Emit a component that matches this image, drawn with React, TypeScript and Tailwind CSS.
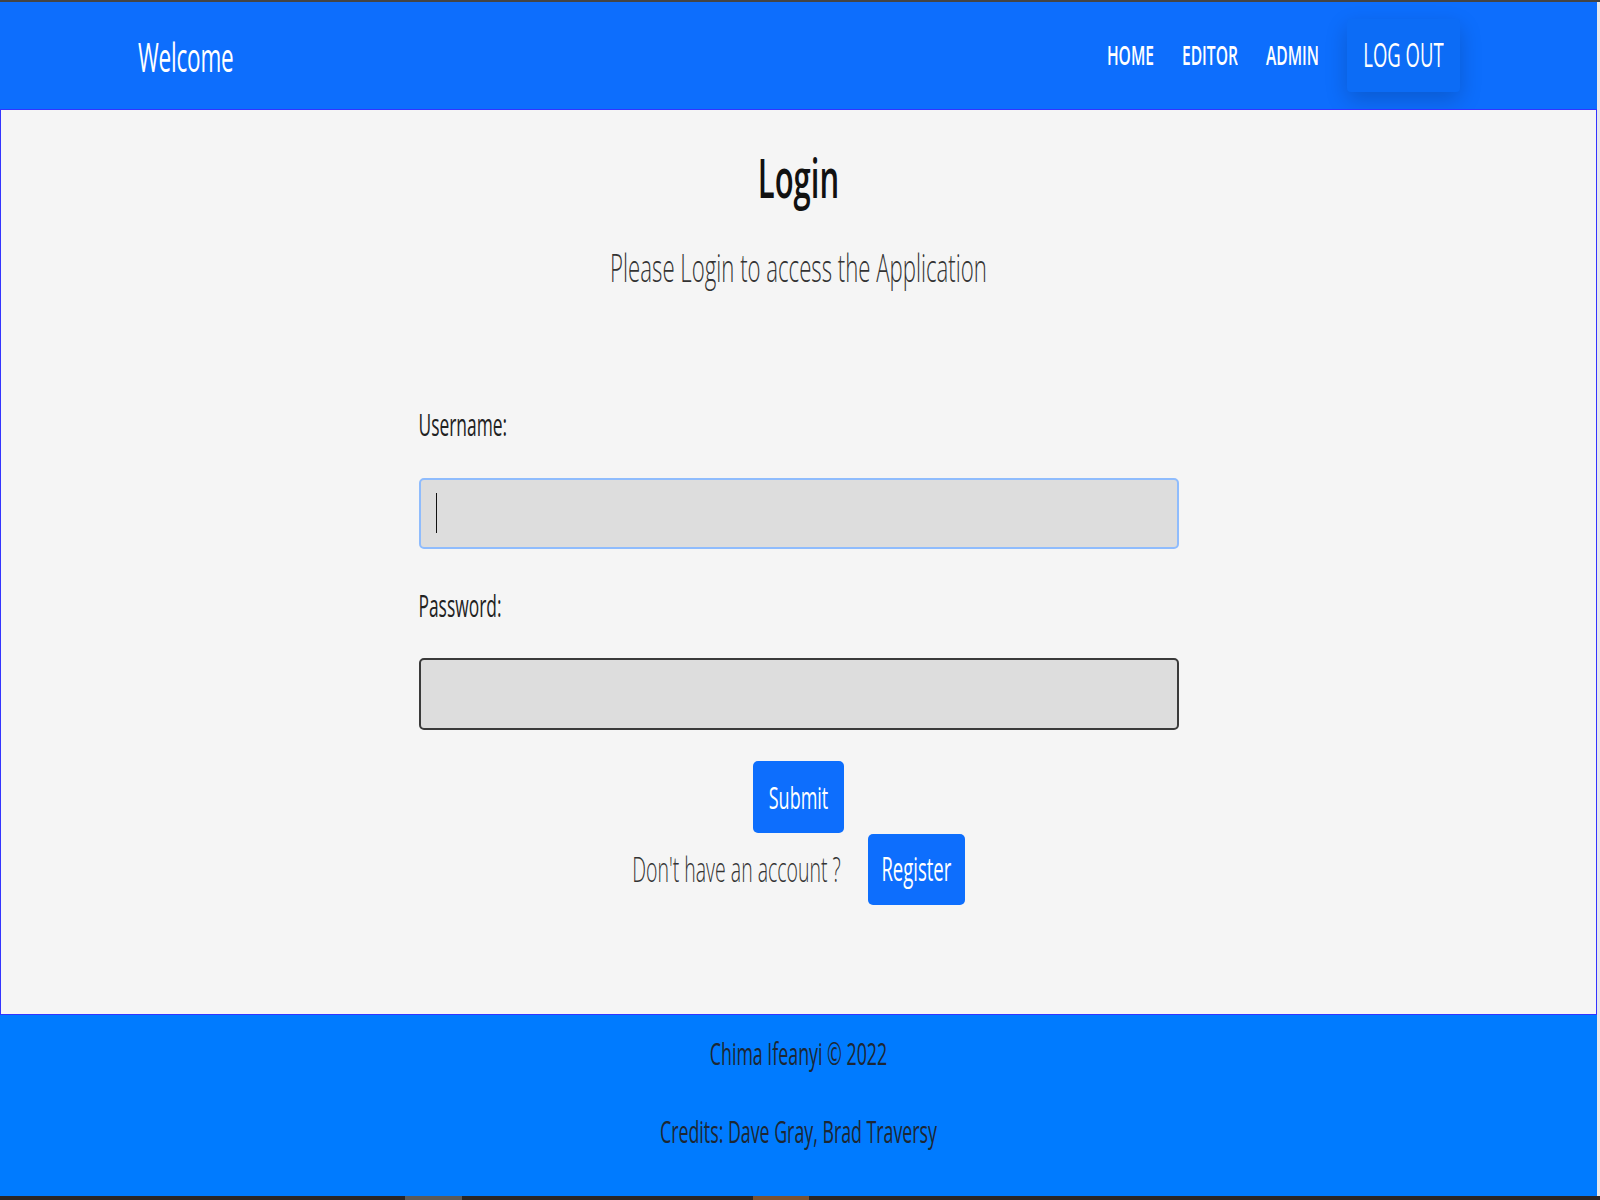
import React from 'react';

const font = { fontFamily: '"Open Sans", "Noto Sans", Arial, sans-serif' };

// text in the shot is stretched tall, so glyphs get a vertical scale
function Tall({ children, className = '' }: { children: React.ReactNode; className?: string }) {
    return <span className={`inline-block origin-center scale-y-[1.75] leading-none whitespace-nowrap ${className}`}>{children}</span>;
}

function NavItem({ label }: { label: string }) {
    return (
        <a href="#" className="text-white font-semibold text-[15.6px]">
            <Tall>{label}</Tall>
        </a>
    );
}

export default function App() {
    return (
        <div className="h-[1200px] w-full overflow-hidden bg-[#e8e8ec] flex flex-col" style={font}>
            <div className="h-[2px] bg-[#444444]" />
            <div className="w-[1597px] flex-1 flex flex-col">
                {/* Navbar */}
                <nav className="h-[107px] bg-[#0d6efd] flex items-center justify-between pl-[138px] pr-[137px]">
                    <a href="#" className="mt-[4px] text-white text-[22.5px] tracking-[-0.2px]">
                        <Tall>Welcome</Tall>
                    </a>
                    <div className="flex items-center gap-[28px]">
                        <NavItem label="HOME" />
                        <NavItem label="EDITOR" />
                        <NavItem label="ADMIN" />
                        <button className="h-[73px] w-[113px] rounded-[4px] bg-[#0c6cf6] text-white text-[18.5px] shadow-[0_8px_22px_rgba(0,0,0,0.18)] flex items-center justify-center">
                            <Tall>LOG OUT</Tall>
                        </button>
                    </div>
                </nav>

                {/* Main */}
                <main className="h-[906px] bg-[#f5f5f5] border border-[#3434ff] flex flex-col items-center">
                    <h1 className="mt-[42px] h-[50px] flex items-center text-[31px] font-semibold text-[#111111]">
                        <Tall>Login</Tall>
                    </h1>
                    <p className="mt-[46px] h-[40px] flex items-center text-[22.2px] font-light text-[#333333]">
                        <Tall>Please Login to access the Application</Tall>
                    </p>

                    <form className="w-[760px] flex flex-col" onSubmit={(e) => e.preventDefault()}>
                        <label className="mt-[122px] h-[30px] flex items-center text-[17.4px] text-[#222222]">
                            <Tall>Username:</Tall>
                        </label>
                        <div className="relative mt-[38px]">
                            <input type="text" className="w-full h-[71px] rounded-[5px] bg-[#dddddd] border-2 border-[#8fbcfd] outline-none px-4" />
                            <span className="absolute left-[17px] top-[15px] w-px h-[40px] bg-[#111111]" />
                        </div>
                        <label className="mt-[42px] h-[30px] flex items-center text-[17.4px] text-[#222222]">
                            <Tall>Password:</Tall>
                        </label>
                        <input type="password" className="mt-[37px] w-full h-[72px] rounded-[5px] bg-[#dddddd] border-2 border-[#3a3a3a] outline-none px-4" />

                        <button type="submit" className="mt-[31px] self-center h-[72px] w-[91px] rounded-[5px] bg-[#0d6efd] text-white text-[18px] flex items-center justify-center">
                            <Tall>Submit</Tall>
                        </button>
                    </form>

                    <div className="mt-px flex items-center gap-[27px]">
                        <span className="text-[19.5px] font-light text-[#333333]">
                            <Tall>Don't have an account ?</Tall>
                        </span>
                        <button className="h-[71px] w-[97px] rounded-[5px] bg-[#0d6efd] text-white text-[18.5px] flex items-center justify-center">
                            <Tall>Register</Tall>
                        </button>
                    </div>
                </main>

                {/* Footer */}
                <footer className="h-[181px] bg-[#007bff] flex flex-col items-center text-[#1d2733] text-[17.8px]">
                    <div className="mt-[24px] h-[30px] flex items-center">
                        <Tall>Chima Ifeanyi © 2022</Tall>
                    </div>
                    <div className="mt-[48px] h-[30px] flex items-center">
                        <Tall>Credits: Dave Gray, Brad Traversy</Tall>
                    </div>
                </footer>
            </div>
            <div className="h-[4px] bg-[#2a2626] flex">
                <div className="ml-[405px] w-[57px] bg-[#5a5a5a]" />
                <div className="ml-[291px] w-[56px] bg-[#7a5232]" />
            </div>
        </div>
    );
}
